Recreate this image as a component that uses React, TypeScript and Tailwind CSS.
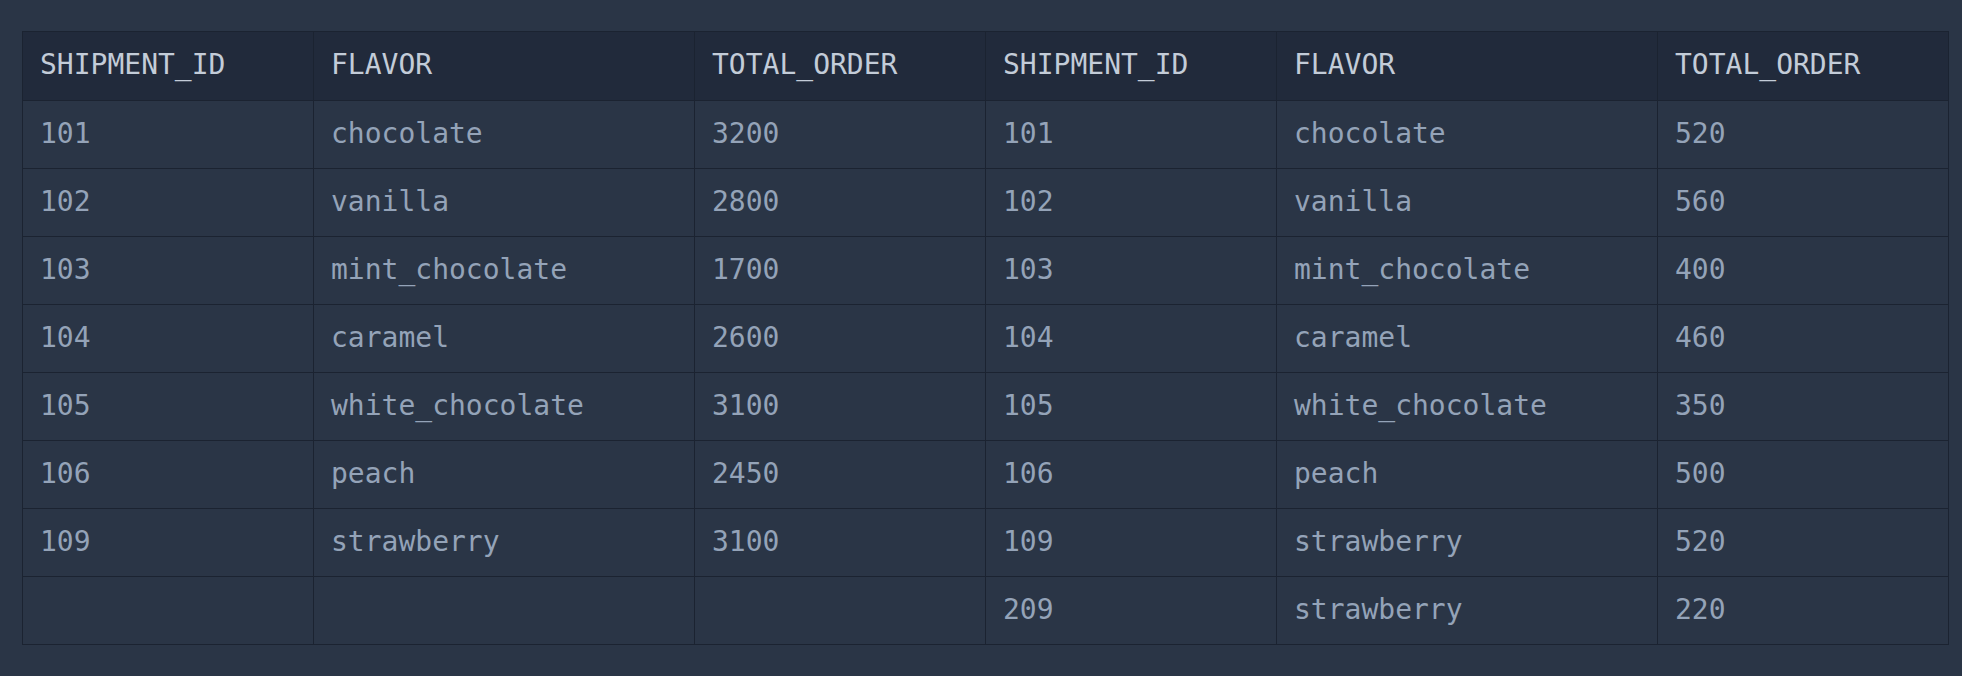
import React from "react";

const left = [
  ["101", "chocolate", "3200"],
  ["102", "vanilla", "2800"],
  ["103", "mint_chocolate", "1700"],
  ["104", "caramel", "2600"],
  ["105", "white_chocolate", "3100"],
  ["106", "peach", "2450"],
  ["109", "strawberry", "3100"],
  ["", "", ""],
];

const right = [
  ["101", "chocolate", "520"],
  ["102", "vanilla", "560"],
  ["103", "mint_chocolate", "400"],
  ["104", "caramel", "460"],
  ["105", "white_chocolate", "350"],
  ["106", "peach", "500"],
  ["109", "strawberry", "520"],
  ["209", "strawberry", "220"],
];

const headers = ["SHIPMENT_ID", "FLAVOR", "TOTAL_ORDER", "SHIPMENT_ID", "FLAVOR", "TOTAL_ORDER"];
const widths = ["w-[291px]", "w-[381px]", "w-[291px]", "w-[291px]", "w-[381px]", "w-[291px]"];

const App: React.FC = () => {
  return (
    <div className="min-h-screen w-full bg-[#2a3546] pt-[31px] pl-[22px] font-['DejaVu_Sans_Mono',monospace]">
      <table className="table-fixed border-collapse border border-[#1b2331] text-[28px] leading-none">
        <colgroup>
          {widths.map((w, i) => (
            <col key={i} className={w} />
          ))}
        </colgroup>
        <thead>
          <tr className="bg-[#212a3b]">
            {headers.map((h, i) => (
              <th
                key={i}
                className="h-[69px] border border-[#1b2331] pl-[17px] pb-[2px] text-left font-normal text-[#c3ccd8]"
              >
                {h}
              </th>
            ))}
          </tr>
        </thead>
        <tbody>
          {left.map((row, r) => (
            <tr key={r}>
              {[...row, ...right[r]].map((cell, c) => (
                <td
                  key={c}
                  className="h-[68px] border border-[#1b2331] pl-[17px] pb-[2px] text-[#94a3b8]"
                >
                  {cell}
                </td>
              ))}
            </tr>
          ))}
        </tbody>
      </table>
    </div>
  );
};

export default App;
